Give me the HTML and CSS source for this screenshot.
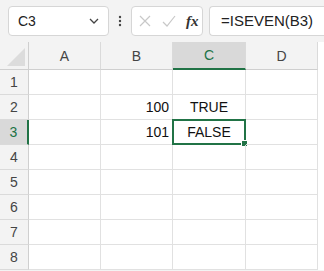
FILE: index.html
```html
<!DOCTYPE html>
<html lang="en">
<head>
    <meta charset="UTF-8">
    <title>ISEVEN</title>
    <link rel="stylesheet" href="styles.css">
</head>
<body>
    <div class="toolbar">
        <div class="namebox">
            <span>C3</span>
            <svg width="12" height="12" viewBox="0 0 12 12"><path d="M2 4 L6 8 L10 4" fill="none" stroke="#444" stroke-width="1.3"/></svg>
        </div>
        <div class="dots">
            <svg width="4" height="14" viewBox="0 0 4 14"><circle cx="2" cy="3" r="1.2" fill="#444"/><circle cx="2" cy="7" r="1.2" fill="#444"/><circle cx="2" cy="11" r="1.2" fill="#444"/></svg>
        </div>
        <div class="fxbox">
            <svg width="14" height="14" viewBox="0 0 14 14"><path d="M2 2 L12 12 M12 2 L2 12" stroke="#c8c8c8" stroke-width="1.2"/></svg>
            <svg width="14" height="14" viewBox="0 0 14 14"><path d="M1 8 L5 12 L13 2" fill="none" stroke="#c8c8c8" stroke-width="1.2"/></svg>
            <span class="fx">fx</span>
        </div>
        <div class="formula">=ISEVEN(B3)</div>
    </div>

    <div class="sheet">
        <div class="corner"><div class="tri"></div></div>
        <div class="colhead">A</div>
        <div class="colhead">B</div>
        <div class="colhead active">C</div>
        <div class="colhead">D</div>

        <div class="rowhead">1</div><div class="cell"></div><div class="cell"></div><div class="cell"></div><div class="cell"></div>
        <div class="rowhead">2</div><div class="cell"></div><div class="cell num">100</div><div class="cell mid">TRUE</div><div class="cell"></div>
        <div class="rowhead active">3</div><div class="cell"></div><div class="cell num">101</div><div class="cell mid selected">FALSE<span class="handle"></span></div><div class="cell"></div>
        <div class="rowhead">4</div><div class="cell"></div><div class="cell"></div><div class="cell"></div><div class="cell"></div>
        <div class="rowhead">5</div><div class="cell"></div><div class="cell"></div><div class="cell"></div><div class="cell"></div>
        <div class="rowhead">6</div><div class="cell"></div><div class="cell"></div><div class="cell"></div><div class="cell"></div>
        <div class="rowhead">7</div><div class="cell"></div><div class="cell"></div><div class="cell"></div><div class="cell"></div>
        <div class="rowhead">8</div><div class="cell"></div><div class="cell"></div><div class="cell"></div><div class="cell"></div>
    </div>
</body>
</html>
```

FILE: styles.css
```css
body {
    margin: 0;
    width: 324px;
    height: 271px;
    overflow: hidden;
    background-color: #f3f3f3;
    font-family: "Liberation Sans", Arial, sans-serif;
    color: #222;
}
.toolbar {
    display: flex;
    align-items: center;
    height: 42px;
    padding: 0 0 0 8px;
    box-sizing: border-box;
}
.namebox {
    display: flex;
    align-items: center;
    justify-content: space-between;
    width: 101px;
    height: 30px;
    padding: 0 8px 0 9px;
    box-sizing: border-box;
    background-color: #fff;
    border: 1px solid #d6d6d6;
    border-radius: 4px;
    font-size: 14px;
}
.dots {
    display: flex;
    width: 22px;
    justify-content: center;
}
.fxbox {
    display: flex;
    align-items: center;
    gap: 10px;
    width: 72px;
    height: 30px;
    padding-left: 6px;
    box-sizing: border-box;
    background-color: #fff;
    border: 1px solid #d6d6d6;
    border-radius: 4px;
}
.fx {
    font-family: "Liberation Serif", serif;
    font-style: italic;
    font-weight: bold;
    font-size: 15px;
    color: #333;
}
.formula {
    flex: 1;
    height: 30px;
    margin-left: 6px;
    padding-left: 11px;
    box-sizing: border-box;
    background-color: #fff;
    border: 1px solid #d6d6d6;
    border-right: none;
    border-radius: 4px 0 0 4px;
    font-size: 15px;
    line-height: 28px;
}
.sheet {
    display: grid;
    grid-template-columns: 29px 72px 72px 73px 72px;
    grid-template-rows: 28px repeat(8, 25px);
    background-color: #fff;
}
.corner {
    position: relative;
    background-color: #f3f3f3;
    border-right: 1px solid #cfcfcf;
    border-bottom: 1px solid #cfcfcf;
}
.tri {
    position: absolute;
    right: 3px;
    bottom: 3px;
    width: 0;
    height: 0;
    border-left: 18px solid transparent;
    border-bottom: 18px solid #dcdcdc;
}
.colhead {
    display: flex;
    align-items: center;
    justify-content: center;
    background-color: #f3f3f3;
    border-right: 1px solid #dadada;
    border-bottom: 1px solid #cfcfcf;
    font-size: 14px;
    color: #444;
}
.colhead.active {
    background-color: #d9d9d9;
    color: #217346;
    border-bottom: 2px solid #217346;
}
.rowhead {
    display: flex;
    align-items: center;
    justify-content: center;
    background-color: #f3f3f3;
    border-right: 1px solid #cfcfcf;
    border-bottom: 1px solid #dadada;
    font-size: 14px;
    color: #444;
}
.rowhead.active {
    background-color: #d9d9d9;
    color: #217346;
    border-right: 2px solid #217346;
}
.cell {
    position: relative;
    display: flex;
    align-items: center;
    padding: 0 3px;
    border-right: 1px solid #e1e1e1;
    border-bottom: 1px solid #e1e1e1;
    font-size: 14px;
    color: #111;
}
.num {
    justify-content: flex-end;
}
.mid {
    justify-content: center;
}
.selected {
    margin: -1px 0 0 -1px;
    border: 2px solid #217346;
}
.handle {
    position: absolute;
    right: -4px;
    bottom: -4px;
    width: 5px;
    height: 5px;
    background-color: #217346;
    border: 1px solid #fff;
}
```
